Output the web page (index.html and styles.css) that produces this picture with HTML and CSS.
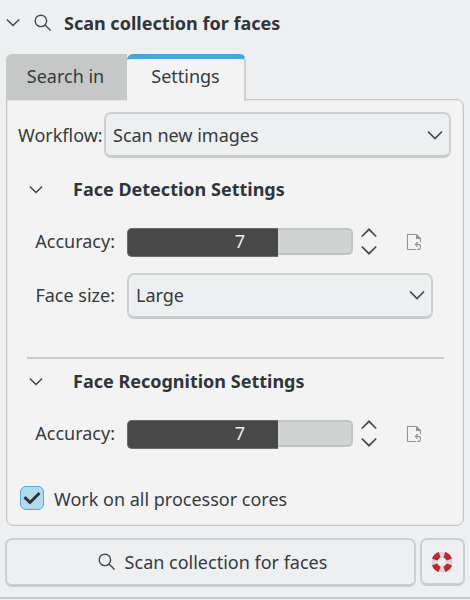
FILE: index.html
```html
<!DOCTYPE html>
<html lang="en">
<head>
<meta charset="utf-8">
<title>Scan collection for faces</title>
<link rel="stylesheet" href="styles.css">
</head>
<body>
<svg class="defs" aria-hidden="true">
  <symbol id="down" viewBox="0 0 16 10"><path d="M1 1.5 8 8.5 15 1.5"/></symbol>
  <symbol id="search" viewBox="0 0 18 18"><circle cx="6.9" cy="6.9" r="5.7"/><path d="M11 11 16.6 16.6"/></symbol>
  <symbol id="reset" viewBox="0 0 16 18"><path d="M10 16.5H1.5V1.5H10.5L14.5 5.5V9.5"/><path class="fold" d="M10 1V6H15Z"/><path d="M11.7 9 9.3 11.4 11.7 13.8M9.3 11.4H12A2.5 2.5 0 0 1 12 16.5H11"/></symbol>
</svg>
<main class="window">
  <header class="title">
    <svg class="chev small"><use href="#down"/></svg>
    <svg class="search"><use href="#search"/></svg>
    <h1>Scan collection for faces</h1>
  </header>
  <nav class="tabs"><div class="tab">Search in</div><div class="tab active">Settings</div></nav>
  <section class="panel">
    <div class="row workflow"><label>Workflow:</label><div class="combo">Scan new images<svg class="chev"><use href="#down"/></svg></div></div>
    <div class="row section"><svg class="chev small"><use href="#down"/></svg><h2>Face Detection Settings</h2></div>
    <div class="row accuracy">
      <label>Accuracy:</label><div class="bar"><span>7</span></div>
      <svg class="spin" viewBox="0 0 16 27"><path d="M.8 8.5 8 1.3 15.2 8.5M.8 18.5 8 25.7 15.2 18.5"/></svg>
      <svg class="reset"><use href="#reset"/></svg>
    </div>
    <div class="row size"><label>Face size:</label><div class="combo">Large<svg class="chev"><use href="#down"/></svg></div></div>
    <hr>
    <div class="row section"><svg class="chev small"><use href="#down"/></svg><h2>Face Recognition Settings</h2></div>
    <div class="row accuracy">
      <label>Accuracy:</label><div class="bar"><span>7</span></div>
      <svg class="spin" viewBox="0 0 16 27"><path d="M.8 8.5 8 1.3 15.2 8.5M.8 18.5 8 25.7 15.2 18.5"/></svg>
      <svg class="reset"><use href="#reset"/></svg>
    </div>
    <div class="row cores"><span class="check"><svg viewBox="0 0 18 14"><path d="M1.5 6.2 7 11.5 16.5 2"/></svg></span><label>Work on all processor cores</label></div>
  </section>
  <footer class="actions">
    <div class="button scan"><svg class="search"><use href="#search"/></svg><span>Scan collection for faces</span></div>
    <div class="button help">
      <svg viewBox="0 0 22 22"><circle class="ring" cx="11" cy="11" r="7.6"/><circle class="bands" cx="11" cy="11" r="7.6" pathLength="80"/></svg>
    </div>
  </footer>
</main>
</body>
</html>
```

FILE: styles.css
```css
* { box-sizing: border-box; }
body { margin: 0; background: #eeeff1; color: #353a3e; font: 18px/26px "Noto Sans", sans-serif; }
.defs { display: none; }
svg { display: block; flex: none; fill: none; stroke: #44484b; stroke-width: 1.4; }
h1, h2 { margin: 0; font-size: 18px; line-height: 26px; font-weight: 700; color: #30353a; }
.window { width: 470px; height: 599px; border-bottom: 2px solid #c8cacc; }
.title { height: 54px; padding: 10px 0 0 6px; display: flex; align-items: flex-start; }
.title .chev { margin-top: 8px; }
.title .search { margin: 4px 12px 0 14px; }
.chev { width: 16px; height: 10px; stroke-width: 1.7; }
.chev.small { width: 14px; height: 9px; }
.search { width: 18px; height: 18px; }
.tabs { display: flex; height: 46px; margin-left: 6px; position: relative; }
.tab { width: 121px; height: 45px; padding: 9px 2px 0 0; text-align: center; background: #c6c8c8; border-radius: 6px 0 0 0; }
.tab.active { width: 119px; height: 47px; padding: 4px 0 0; background: #f3f3f3; border-top: 5px solid #45a7da; border-right: 2px solid #cfd1d3; border-radius: 6px 6px 0 0; }
.panel { width: 458px; height: 427px; margin: -1px 0 0 6px; border: 1px solid #c3c6c8; box-shadow: inset 0 0 0 1px #e5e6e7; border-radius: 0 7px 7px 7px; background: #f3f3f3; padding: 12px 0 0; }
.row { display: flex; align-items: center; }
.workflow { height: 46px; padding-left: 10px; }
.workflow label { width: 87px; padding-left: 1px; }
.combo { width: 347px; height: 46px; padding: 0 7px; display: flex; align-items: center; justify-content: space-between; background: #eeeff1; border: 2px solid #cdd0d1; border-bottom: 3px solid #c9cccd; border-radius: 7px; }
.combo .chev { margin-right: -1px; }
.section { height: 62px; padding-left: 22px; }
.section h2 { margin-left: 30px; }
.accuracy { height: 43px; margin-bottom: -1px; padding-left: 20px; }
.accuracy label, .size label { width: 88px; margin-right: 12px; text-align: right; }
.accuracy label { padding-bottom: 1px; }
.bar { width: 226px; height: 27px; border: 2px solid #c2c4c4; border-radius: 5px; background: #d1d4d4; color: #eee; text-align: center; line-height: 23px; position: relative; }
.bar::before { content: ""; position: absolute; left: -2px; top: -2px; width: 150px; height: 27px; border: 1px solid #6b6d6d; border-right: 0; border-radius: 5px 0 0 5px; background: #484848; }
.bar span { position: relative; }
.spin { width: 16px; height: 27px; margin-left: 8px; stroke-width: 1.7; }
.reset { width: 16px; height: 18px; margin-left: 29px; stroke: #929496; stroke-width: 1.1; }
.fold { fill: #929496; stroke: none; }
.size { height: 46px; margin-top: 11px; padding-left: 20px; }
.size label { padding-bottom: 2px; }
.size .combo { width: 306px; padding-bottom: 2px; }
hr { margin: 38px 19px -9px 20px; height: 2px; border: 0; background: #c7cacc; }
.cores { margin-top: 32px; height: 26px; padding-left: 13px; }
.check { width: 24px; height: 24px; margin: 0 10px 2px 0; display: grid; place-items: center; background: #b4daef; border: 1.5px solid #50aadb; border-radius: 6px; }
.check svg { width: 18px; height: 14px; stroke: #2e3439; stroke-width: 3; }
.actions { display: flex; gap: 4px; margin: 12px 0 0 5px; }
.button { height: 49px; display: flex; align-items: center; justify-content: center; border: 2px solid #cdcfd1; border-bottom: 3px solid #c9cbcd; border-radius: 7px; }
.scan { width: 411px; gap: 9px; padding-left: 4px; }
.help { width: 45px; height: 48px; padding-right: 2px; }
.help svg { width: 22px; height: 22px; }
.ring { stroke: #d7d5d5; stroke-width: 5.8; }
.bands { stroke: #bd2834; stroke-width: 5.8; stroke-dasharray: 12 8; stroke-dashoffset: -4; }
```
